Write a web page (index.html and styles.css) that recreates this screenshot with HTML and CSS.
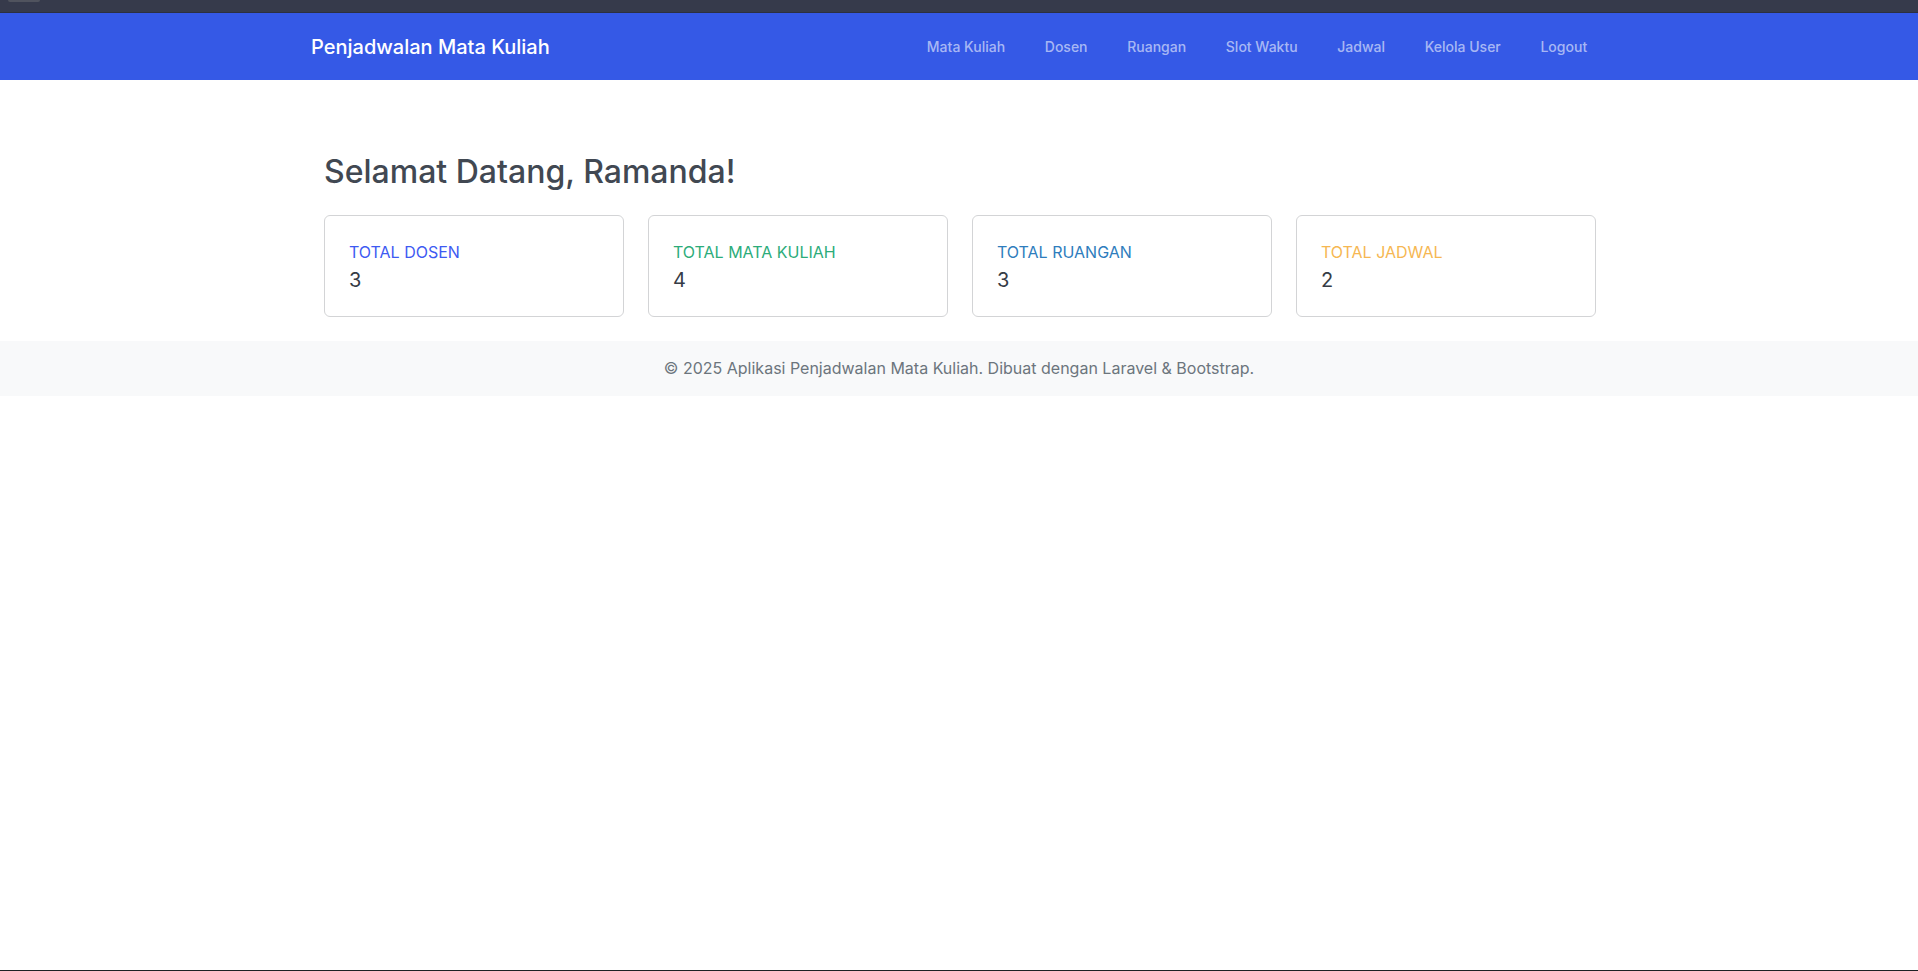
FILE: index.html
```html
<!DOCTYPE html>
<html lang="id">
<head>
<meta charset="utf-8">
<title>Penjadwalan Mata Kuliah</title>
<link rel="stylesheet" href="styles.css">
</head>
<body>
<div class="page">
  <div class="topstrip"><span class="tab"></span></div>
  <nav class="navbar">
    <div class="nav-container">
      <a class="brand" href="#">Penjadwalan Mata Kuliah</a>
      <ul class="nav-links">
        <li><a href="#">Mata Kuliah</a></li>
        <li><a href="#">Dosen</a></li>
        <li><a href="#">Ruangan</a></li>
        <li><a href="#">Slot Waktu</a></li>
        <li><a href="#">Jadwal</a></li>
        <li><a href="#">Kelola User</a></li>
        <li><a href="#">Logout</a></li>
      </ul>
    </div>
  </nav>
  <main class="main">
    <h2 class="welcome">Selamat Datang, Ramanda!</h2>
    <div class="stats">
      <div class="card">
        <div class="label label-blue">TOTAL DOSEN</div>
        <div class="value">3</div>
      </div>
      <div class="card">
        <div class="label label-green">TOTAL MATA KULIAH</div>
        <div class="value">4</div>
      </div>
      <div class="card">
        <div class="label label-info">TOTAL RUANGAN</div>
        <div class="value">3</div>
      </div>
      <div class="card">
        <div class="label label-warn">TOTAL JADWAL</div>
        <div class="value">2</div>
      </div>
    </div>
  </main>
  <footer class="footer">© 2025 Aplikasi Penjadwalan Mata Kuliah. Dibuat dengan Laravel &amp; Bootstrap.</footer>
  <div class="spacer"></div>
  <div class="bottomline"></div>
</div>
</body>
</html>
```
FILE: styles.css
```css
* { box-sizing: border-box; }
html, body { margin: 0; padding: 0; }
body {
  font-family: Inter, "Noto Sans", "Liberation Sans", sans-serif;
  font-size: 16px;
  line-height: 1.5;
  color: #212529;
  background: #fff;
}
.page {
  min-height: 100vh;
  display: flex;
  flex-direction: column;
}
.topstrip {
  height: 13px;
  background: #363a4b;
  border-bottom: 1px solid #2c3040;
  display: flex;
  padding-left: 8px;
}
.tab {
  width: 32px;
  height: 2px;
  background: #50535e;
  border-radius: 0 0 3px 3px;
}
.navbar {
  background: #3559e6;
  height: 67px;
  display: flex;
  align-items: center;
}
.nav-container {
  width: 1320px;
  margin: 0 auto;
  padding: 0 12px;
  display: flex;
  align-items: center;
  justify-content: space-between;
}
.brand {
  color: #fff;
  text-decoration: none;
  font-size: 20px;
  font-weight: 500;
  line-height: 30px;
}
.nav-links {
  list-style: none;
  margin: 0;
  padding: 0;
  display: flex;
}
.nav-links a {
  display: block;
  padding: 8px 19.85px;
  color: rgba(255, 255, 255, 0.58);
  text-decoration: none;
  font-size: 14px;
  font-weight: 500;
  line-height: 22px;
}
.main {
  width: 1274px;
  margin: 0 auto;
  padding: 73px 0 24px 2px;
}
.welcome {
  margin: 0 0 24px;
  font-size: 32px;
  font-weight: 500;
  line-height: 1.2;
  color: #414852;
}
.stats {
  display: grid;
  grid-template-columns: repeat(4, 1fr);
  gap: 24px;
}
.card {
  border: 1px solid #d3d4d6;
  border-radius: 6px;
  padding: 24px;
  height: 102px;
}
.label {
  font-size: 16px;
  line-height: 24px;
  margin-bottom: 4px;
}
.label-blue { color: #3d5af2; }
.label-green { color: #2cac7a; }
.label-info { color: #2e7dbd; }
.label-warn { color: #f6b752; }
.value {
  font-size: 20px;
  line-height: 24px;
  font-weight: 400;
  color: #363c46;
}
.footer {
  background: #f8f9fa;
  text-align: center;
  color: #6c757d;
  font-size: 16px;
  line-height: 24px;
  padding: 15px 0 16px;
}
.spacer { flex: 1; }
.bottomline {
  height: 1px;
  background: #1d2125;
}
```
